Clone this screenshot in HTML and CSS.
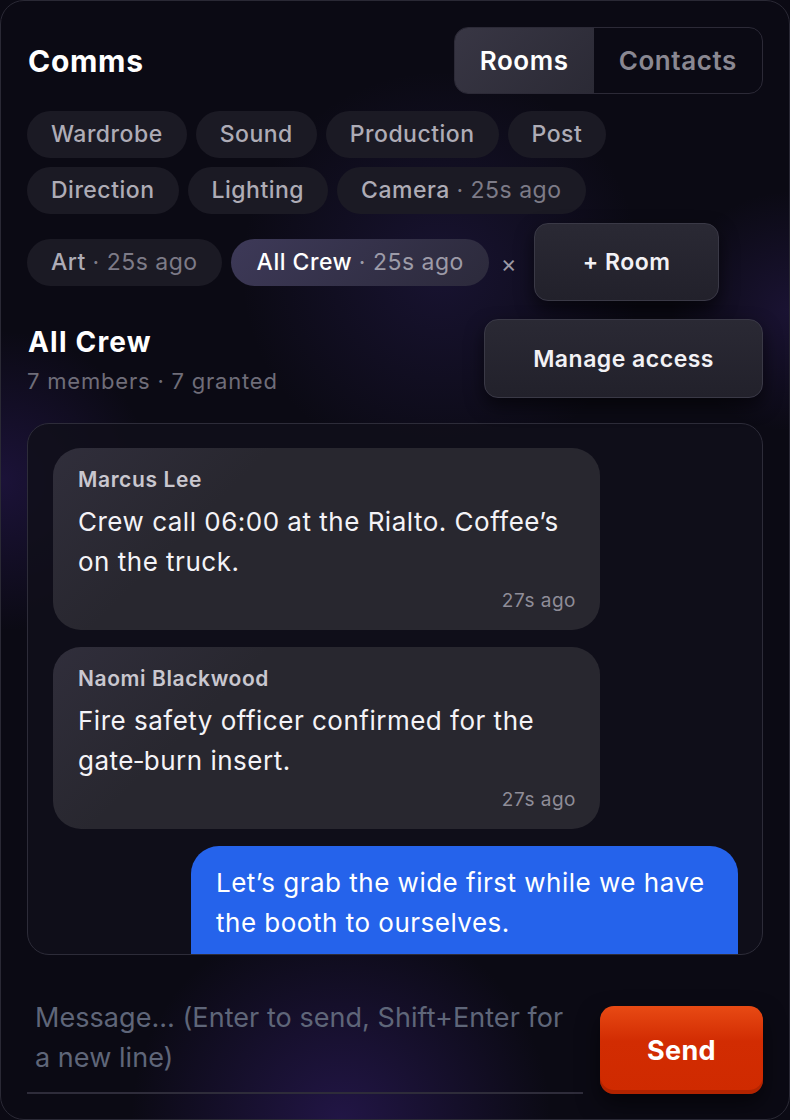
FILE: index.html
```html
<!DOCTYPE html>
<html lang="en">
<head>
    <meta charset="UTF-8">
    <meta name="viewport" content="width=device-width, initial-scale=1.0">
    <title>Comms</title>
    <link rel="stylesheet" href="styles.css">
</head>
<body>
    <div class="panel">
        <div class="header">
            <h1>Comms</h1>
            <div class="tabs">
                <button class="tab active">Rooms</button>
                <button class="tab">Contacts</button>
            </div>
        </div>

        <div class="rooms">
            <span class="chip">Wardrobe</span>
            <span class="chip">Sound</span>
            <span class="chip">Production</span>
            <span class="chip">Post</span>
            <span class="chip">Direction</span>
            <span class="chip">Lighting</span>
            <span class="chip">Camera <span class="ago">· 25s ago</span></span>
            <span class="chip">Art <span class="ago">· 25s ago</span></span>
            <span class="chip active">All Crew <span class="ago">· 25s ago</span></span>
            <span class="close">×</span>
            <button class="btn">+ Room</button>
        </div>

        <div class="room-head">
            <div>
                <h2>All Crew</h2>
                <div class="meta">7 members · 7 granted</div>
            </div>
            <button class="btn">Manage access</button>
        </div>

        <div class="messages">
            <div class="msg">
                <div class="author">Marcus Lee</div>
                <div class="text">Crew call 06:00 at the Rialto. Coffee’s on the truck.</div>
                <div class="time">27s ago</div>
            </div>
            <div class="msg">
                <div class="author">Naomi Blackwood</div>
                <div class="text">Fire safety officer confirmed for the gate&#8209;burn insert.</div>
                <div class="time">27s ago</div>
            </div>
            <div class="msg mine">
                <div class="text">Let’s grab the wide first while we have the booth to ourselves.</div>
                <div class="time">27s ago</div>
            </div>
        </div>

        <div class="composer">
            <textarea placeholder="Message… (Enter to send, Shift+Enter for a new line)"></textarea>
            <button class="send">Send</button>
        </div>
    </div>
</body>
</html>
```

FILE: styles.css
```css
* {
    box-sizing: border-box;
}
body {
    margin: 0;
    background: #0b0a14;
    font-family: Inter, "Noto Sans", sans-serif;
    color: #fff;
}
.panel {
    width: 790px;
    height: 1120px;
    border: 1px solid #2a2935;
    border-radius: 24px;
    padding: 26px 26px 0 26px;
    overflow: hidden;
    background:
        radial-gradient(circle at 440px 270px, rgba(70, 50, 150, 0.22), transparent 200px),
        radial-gradient(circle at 0px 480px, rgba(70, 40, 150, 0.28), transparent 150px),
        radial-gradient(circle at 790px 310px, rgba(80, 50, 160, 0.22), transparent 120px),
        radial-gradient(circle at 340px 1120px, rgba(70, 40, 150, 0.38), transparent 210px),
        #0b0a14;
}
.header {
    display: flex;
    justify-content: space-between;
    align-items: center;
}
h1 {
    margin: 0 0 0 1px;
    font-size: 30px;
    font-weight: 700;
    letter-spacing: 0.7px;
}
.tabs {
    display: flex;
    border: 1px solid #2c2a37;
    border-radius: 14px;
    overflow: hidden;
    height: 67px;
}
.tab {
    font-family: inherit;
    font-size: 26px;
    font-weight: 600;
    letter-spacing: 0.6px;
    color: #8a8892;
    background: transparent;
    border: none;
    padding: 0 25px;
}
.tab.active {
    color: #fff;
    background: linear-gradient(135deg, #383644, #2b2a35);
}
.rooms {
    display: flex;
    flex-wrap: wrap;
    align-items: center;
    gap: 9px;
    margin-top: 17px;
}
.chip {
    height: 47px;
    line-height: 47px;
    padding: 0 24px;
    border-radius: 24px;
    background: #1b1a24;
    font-size: 23px;
    font-weight: 500;
    letter-spacing: 0.5px;
    color: #aeacb6;
}
.chip .ago {
    color: #7d7b87;
    font-weight: 400;
}
.chip.active {
    background: linear-gradient(135deg, #3d3958, #2c2a3b);
    color: #fff;
    padding: 0 25px 0 26px;
}
.chip.active .ago {
    color: #9d9ba8;
}
.close {
    font-size: 24px;
    color: #9b99a4;
    margin: 2px 8px 0 3px;
}
.btn {
    font-family: inherit;
    font-size: 23px;
    font-weight: 600;
    letter-spacing: 0.5px;
    color: #f2f1f5;
    background: linear-gradient(180deg, #2a2934, #22212b);
    border: 1px solid #3a3946;
    border-radius: 14px;
    padding: 0 48px;
    height: 78px;
    box-shadow: 0 8px 18px rgba(0, 0, 0, 0.55);
}
.room-head {
    display: flex;
    justify-content: space-between;
    align-items: center;
    margin-top: 18px;
}
h2 {
    margin: 0 0 0 1px;
    font-size: 28px;
    font-weight: 700;
    letter-spacing: 1.2px;
    line-height: 36px;
}
.meta {
    font-size: 22px;
    line-height: 26px;
    letter-spacing: 0.8px;
    color: #6f6d79;
    margin-top: 8px;
}
.room-head .btn {
    height: 79px;
}
.messages {
    margin-top: 25px;
    height: 532px;
    border: 1px solid #2d2c39;
    border-radius: 22px;
    background: rgba(16, 15, 26, 0.85);
    padding: 24px 25px;
    overflow: hidden;
    display: flex;
    flex-direction: column;
    gap: 17px;
}
.msg {
    width: 547px;
    flex-shrink: 0;
    background: linear-gradient(135deg, #302e3b, #28272f 30%);
    border-radius: 28px;
    padding: 20px 24px 17px 25px;
}
.author {
    font-size: 21px;
    font-weight: 600;
    letter-spacing: 0.6px;
    color: #c9c7cf;
    line-height: 24px;
}
.text {
    font-size: 26px;
    line-height: 40px;
    letter-spacing: 0.5px;
    color: #f4f3f7;
    margin-top: 10px;
}
.time {
    text-align: right;
    font-size: 19px;
    line-height: 24px;
    letter-spacing: 0.5px;
    color: #8f8d98;
    margin-top: 7px;
}
.msg.mine {
    align-self: flex-end;
    background: #2563eb;
    padding-top: 17px;
    margin-right: -1px;
}
.msg.mine .text {
    color: #fff;
    margin-top: 0;
}
.msg.mine .time {
    color: #c9d8ff;
}
.composer {
    display: flex;
    align-items: flex-end;
    gap: 17px;
    margin-top: 43px;
}
textarea {
    flex: 1;
    height: 96px;
    resize: none;
    background: transparent;
    border: none;
    border-bottom: 2px solid #2e2c3a;
    font-family: inherit;
    font-size: 27px;
    line-height: 40px;
    letter-spacing: 0.05px;
    padding: 0 4px 0 8px;
    color: #fff;
    outline: none;
}
textarea::placeholder {
    color: #5f6679;
}
.send {
    width: 163px;
    height: 88px;
    font-family: inherit;
    font-size: 27px;
    font-weight: 700;
    letter-spacing: 0.3px;
    color: #fff;
    background: linear-gradient(180deg, #e84a14, #d22c02 40%, #cf2a00);
    border: none;
    border-radius: 14px;
    box-shadow: inset 0 -4px 0 rgba(150, 30, 0, 0.5), 0 10px 22px rgba(0, 0, 0, 0.55);
}
```
